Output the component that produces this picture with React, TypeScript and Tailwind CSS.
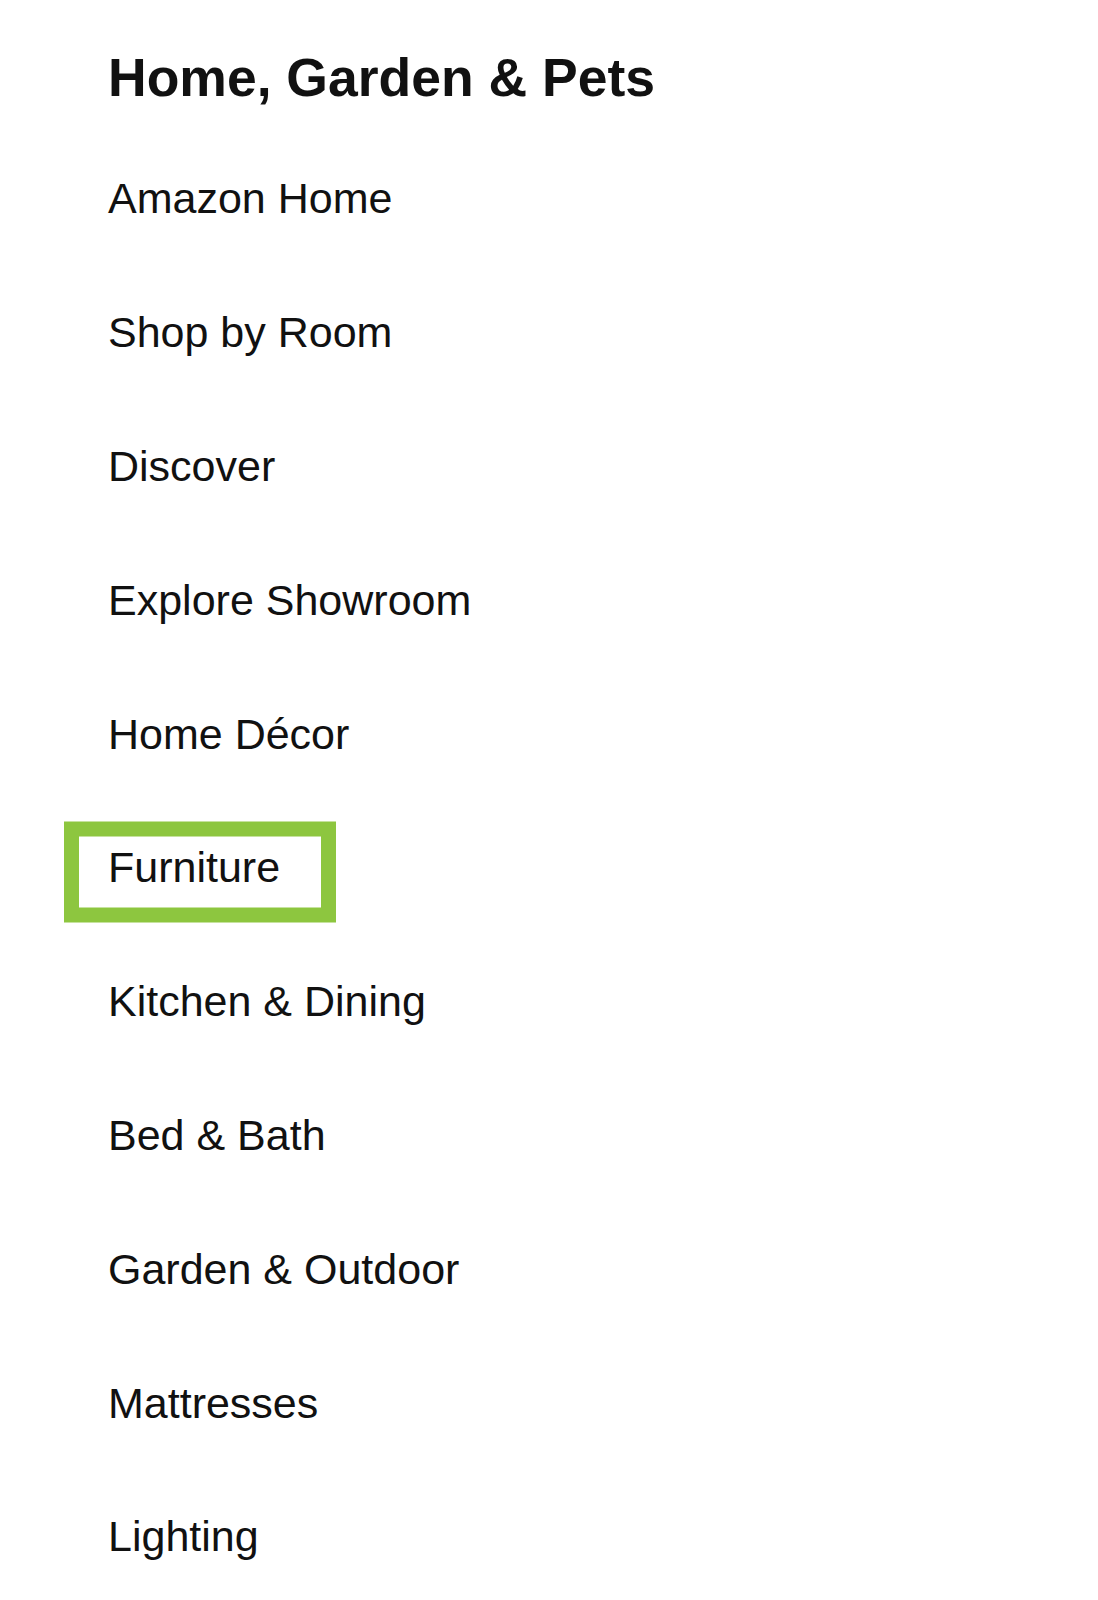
import React from "react";

const items = [
  "Amazon Home",
  "Shop by Room",
  "Discover",
  "Explore Showroom",
  "Home Décor",
  "Furniture",
  "Kitchen & Dining",
  "Bed & Bath",
  "Garden & Outdoor",
  "Mattresses",
  "Lighting",
];

export default function App() {
  return (
    <div
      className="w-[1098px] h-[1600px] bg-white overflow-hidden text-[#111111]"
      style={{ fontFamily: '"Liberation Sans", Arial, sans-serif' }}
    >
      <div className="pl-[108px] pt-[51px]">
        <h1 className="text-[53.5px] font-bold leading-none h-[53px] whitespace-nowrap">
          Home, Garden &amp; Pets
        </h1>
        <ul className="mt-[28px]">
          {items.map((it) => (
            <li key={it} className="h-[133.8px] flex items-center">
              <span className="relative text-[43px] leading-none whitespace-nowrap">
                {it === "Furniture" && (
                  <span className="absolute left-[-44px] top-[calc(50%+4px)] -translate-y-1/2 w-[272px] h-[101px] border-[15px] border-[#8dc63f]" />
                )}
                <span className="relative">{it}</span>
              </span>
            </li>
          ))}
        </ul>
      </div>
    </div>
  );
}
